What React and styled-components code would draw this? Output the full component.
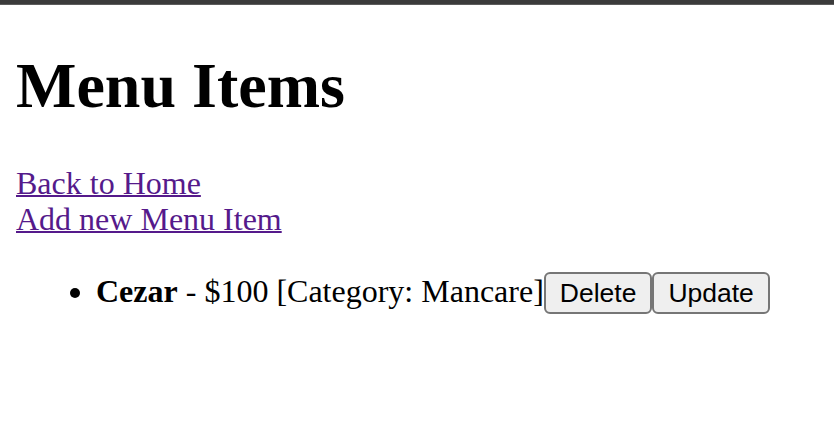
import React from 'react';
import styled, { createGlobalStyle } from 'styled-components';

const GlobalStyle = createGlobalStyle`
  body {
    margin: 0;
    background: #fff;
    font-family: "Liberation Serif", "Times New Roman", serif;
    color: #000;
  }
`;

const TopBar = styled.div`
  height: 4px;
  background: #3b3b3b;
  border-bottom: 1px solid #5c5c5c;
`;

const Page = styled.div`
  padding: 0 16px;
  overflow: hidden;
`;

const Title = styled.h1`
  font-size: 64px;
  font-weight: bold;
  margin: 44px 0 42px;
  line-height: 73.6px;
`;

const Links = styled.div`
  display: flex;
  flex-direction: column;
  align-items: flex-start;
`;

const NavLink = styled.a`
  font-size: 32px;
  line-height: 36.8px;
  color: #551a8b;
  text-decoration: underline;
  text-decoration-thickness: 2px;
  cursor: pointer;
`;

const ItemList = styled.ul`
  margin: 34px 0;
  padding-left: 80px;
  font-size: 32px;
  line-height: 36.8px;
`;

const Item = styled.li`
  list-style: disc;
`;

const ActionButton = styled.button`
  font-family: "Liberation Sans", Arial, sans-serif;
  font-size: 26.5px;
  color: #000;
  background: #efefef;
  border: 2px solid #767676;
  border-radius: 6px;
  padding: 2px 14px;
  height: 42px;
  vertical-align: baseline;
  margin: 0;
`;

const items = [{ name: 'Cezar', price: 100, category: 'Mancare' }];

export default function App() {
  return (
    <>
      <GlobalStyle />
      <TopBar />
      <Page>
        <Title>Menu Items</Title>
        <Links>
          <NavLink href="#">Back to Home</NavLink>
          <NavLink href="#">Add new Menu Item</NavLink>
        </Links>
        <ItemList>
          {items.map(item => (
            <Item key={item.name}>
              <strong>{item.name}</strong> - ${item.price} [Category: {item.category}]
              <ActionButton>Delete</ActionButton>
              <ActionButton>Update</ActionButton>
            </Item>
          ))}
        </ItemList>
      </Page>
    </>
  );
}
